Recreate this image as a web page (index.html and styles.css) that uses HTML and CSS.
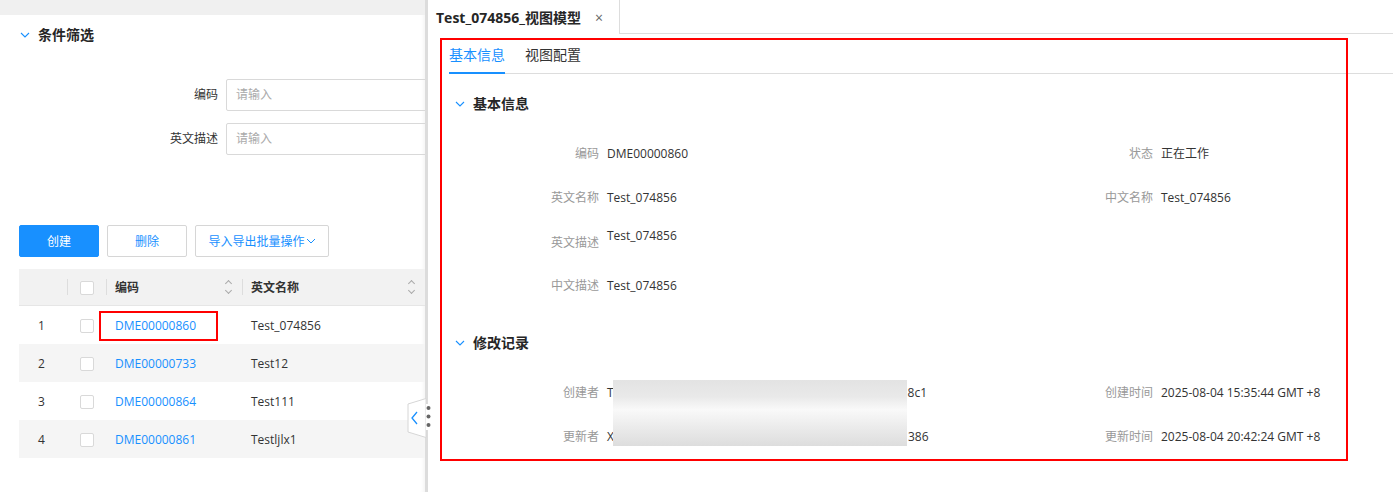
FILE: index.html
```html
<!DOCTYPE html>
<html lang="zh-CN">
<head>
    <meta charset="UTF-8">
    <title>视图模型</title>
    <link rel="stylesheet" href="styles.css">
</head>
<body>

<div class="page">
    <aside class="list-panel">
        <div class="top-strip"></div>

        <div class="section-title filter-title">
            <svg class="chev" width="10" height="6" viewBox="0 0 10 6"><path d="M1 1 L5 5 L9 1" /></svg>
            条件筛选
        </div>

        <div class="filter-form">
            <span class="field-label">编码</span>
            <span class="input">请输入</span>
            <span class="field-label">英文描述</span>
            <span class="input">请输入</span>
        </div>

        <div class="toolbar">
            <button class="btn btn-primary">创建</button>
            <button class="btn">删除</button>
            <button class="btn btn-wide">导入导出批量操作<svg class="btn-arrow" width="10" height="6" viewBox="0 0 10 6"><path d="M1 1 L5 5 L9 1" /></svg></button>
        </div>

        <div class="table-wrap">
            <table class="grid-table">
                <thead>
                    <tr>
                        <th class="col-index"></th>
                        <th class="col-check"><span class="checkbox"></span></th>
                        <th class="col-code">编码<span class="sorter"></span></th>
                        <th class="col-name">英文名称<span class="sorter"></span></th>
                    </tr>
                </thead>
                <tbody>
                    <tr>
                        <td class="col-index">1</td>
                        <td class="col-check"><span class="checkbox"></span></td>
                        <td class="col-code"><a>DME00000860</a></td>
                        <td class="col-name">Test_074856</td>
                    </tr>
                    <tr>
                        <td class="col-index">2</td>
                        <td class="col-check"><span class="checkbox"></span></td>
                        <td class="col-code"><a>DME00000733</a></td>
                        <td class="col-name">Test12</td>
                    </tr>
                    <tr>
                        <td class="col-index">3</td>
                        <td class="col-check"><span class="checkbox"></span></td>
                        <td class="col-code"><a>DME00000864</a></td>
                        <td class="col-name">Test111</td>
                    </tr>
                    <tr>
                        <td class="col-index">4</td>
                        <td class="col-check"><span class="checkbox"></span></td>
                        <td class="col-code"><a>DME00000861</a></td>
                        <td class="col-name">Testljlx1</td>
                    </tr>
                </tbody>
            </table>
            <!-- annotation frame drawn over the first code cell -->
            <div class="mark mark-cell"></div>
        </div>
    </aside>

    <div class="splitter">
        <svg class="collapse-handle" width="24" height="40" viewBox="0 0 24 40">
            <polygon points="1,6 19,0.5 19,39.5 1,34" fill="#fff" stroke="#d6d6d6" />
            <path d="M10 14 L5 20 L10 26" fill="none" stroke="#1890ff" stroke-width="1.3" />
            <rect x="19" y="6" width="5" height="26" fill="#fff" />
            <circle cx="21.5" cy="10" r="2" fill="#666" />
            <circle cx="21.5" cy="18.5" r="2" fill="#666" />
            <circle cx="21.5" cy="27" r="2" fill="#666" />
        </svg>
    </div>

    <main class="detail-panel">
        <div class="doc-tabs">
            <div class="doc-tab">Test_074856_视图模型<span class="close">×</span></div>
            <div class="doc-tabs-rest"></div>
        </div>

        <div class="detail-body">
            <div class="inner-tabs">
                <span class="inner-tab active">基本信息</span>
                <span class="inner-tab">视图配置</span>
            </div>

            <div class="section-title block-title">
                <svg class="chev" width="10" height="6" viewBox="0 0 10 6"><path d="M1 1 L5 5 L9 1" /></svg>
                基本信息
            </div>
            <div class="info-grid">
                <span class="info-label">编码</span>
                <span class="info-value">DME00000860</span>
                <span class="info-label">状态</span>
                <span class="info-value">正在工作</span>

                <span class="info-label">英文名称</span>
                <span class="info-value">Test_074856</span>
                <span class="info-label">中文名称</span>
                <span class="info-value">Test_074856</span>

                <span class="info-label info-label-low">英文描述</span>
                <span class="info-value info-value-high">Test_074856</span>
                <span class="info-label"></span>
                <span class="info-value"></span>

                <span class="info-label">中文描述</span>
                <span class="info-value">Test_074856</span>
                <span class="info-label"></span>
                <span class="info-value"></span>
            </div>

            <div class="section-title block-title record-title">
                <svg class="chev" width="10" height="6" viewBox="0 0 10 6"><path d="M1 1 L5 5 L9 1" /></svg>
                修改记录
            </div>
            <div class="info-grid record-grid">
                <span class="info-label">创建者</span>
                <span class="info-value">T<span class="masked"></span>8c1</span>
                <span class="info-label">创建时间</span>
                <span class="info-value">2025-08-04 15:35:44 GMT +8</span>

                <span class="info-label">更新者</span>
                <span class="info-value">X<span class="masked"></span>386</span>
                <span class="info-label">更新时间</span>
                <span class="info-value">2025-08-04 20:42:24 GMT +8</span>

                <!-- blurred-out user ids -->
                <div class="blur-patch"></div>
            </div>
        </div>

        <!-- annotation frame around the detail area -->
        <div class="mark mark-detail"></div>
    </main>
</div>

</body>
</html>
```

FILE: styles.css
```css
body {
    margin: 0;
    font-family: 'Open Sans', 'Noto Sans CJK SC', sans-serif;
    font-size: 12px;
    color: #333;
    background: #fff;
    overflow: hidden;
}

.page {
    display: flex;
    height: 492px;
}

/* ---------- left list ---------- */

.list-panel {
    width: 425px;
    flex: none;
    overflow: hidden;
    background: #fff;
    box-shadow: inset -4px 0 4px -3px rgba(0, 0, 0, 0.06);
}

.top-strip {
    height: 15px;
    background: #f0f0f0;
}

.section-title {
    display: flex;
    align-items: center;
    font-size: 14px;
    font-weight: bold;
    color: #262626;
    line-height: 22px;
}

.chev {
    fill: none;
    stroke: #1890ff;
    stroke-width: 1.1;
    margin-right: 8px;
}

.filter-title {
    margin-top: 9px;
    padding-left: 20px;
}

.filter-form {
    display: grid;
    grid-template-columns: 218px 260px;
    column-gap: 8px;
    row-gap: 12px;
    margin-top: 33px;
}

.field-label {
    text-align: right;
    line-height: 32px;
    color: #333;
}

.input {
    height: 30px;
    line-height: 30px;
    border: 1px solid #d9d9d9;
    border-radius: 2px;
    padding-left: 9px;
    color: #aaa;
}

.toolbar {
    display: flex;
    gap: 8px;
    margin-top: 70px;
    padding-left: 19px;
}

.btn {
    height: 32px;
    width: 80px;
    border: 1px solid #d6d6d6;
    border-radius: 2px;
    background: #fff;
    color: #1890ff;
    font-family: inherit;
    font-size: 12px;
    padding: 0;
}

.btn-primary {
    background: #1890ff;
    border-color: #1890ff;
    color: #fff;
}

.btn-wide {
    width: 134px;
}

.btn-arrow {
    fill: none;
    stroke: #1890ff;
    stroke-width: 1;
    margin-left: 1px;
    vertical-align: 2px;
}

.table-wrap {
    position: relative;
    margin-top: 12px;
    padding-left: 19px;
}

.grid-table {
    width: 406px;
    border-collapse: collapse;
    table-layout: fixed;
}

.grid-table th {
    height: 36px;
    background: #f2f2f2;
    border-bottom: 1px solid #e6e6e6;
    text-align: left;
    font-weight: bold;
    color: #333;
    position: relative;
    padding: 0 0 0 9px;
}

.grid-table th + th::before {
    content: "";
    position: absolute;
    left: 0;
    top: 10px;
    height: 16px;
    border-left: 1px solid #ddd;
}

.grid-table td {
    height: 38px;
    padding: 0 0 0 9px;
}

.grid-table tbody tr:nth-child(even) td {
    background: #f5f5f5;
}

.col-index { width: 39px; }
.col-check { width: 30px; }
.col-code { width: 127px; }

.grid-table td.col-index {
    padding-left: 19px;
    width: 29px;
}

.grid-table .col-check {
    padding-left: 13px;
    width: 26px;
}

.checkbox {
    display: inline-block;
    width: 12px;
    height: 12px;
    border: 1px solid #d9d9d9;
    border-radius: 2px;
    background: #fff;
    vertical-align: middle;
}

.grid-table a {
    color: #1890ff;
}

.sorter {
    position: absolute;
    right: 9px;
    top: 11px;
    width: 8px;
    height: 14px;
}

.sorter::before,
.sorter::after {
    content: "";
    position: absolute;
    left: 1px;
    width: 4px;
    height: 4px;
    border-left: 1px solid #aaa;
    border-top: 1px solid #aaa;
    transform: rotate(45deg);
}

.sorter::before { top: 1px; }
.sorter::after { top: 8px; transform: rotate(225deg); }

.mark {
    position: absolute;
    border: 2px solid #f00;
    box-sizing: border-box;
    pointer-events: none;
}

.mark-cell {
    left: 99px;
    top: 42px;
    width: 119px;
    height: 30px;
}

/* ---------- splitter ---------- */

.splitter {
    position: relative;
    width: 3px;
    flex: none;
    background: #dcdcdc;
}

.collapse-handle {
    position: absolute;
    left: -18px;
    top: 398px;
}

/* ---------- right detail ---------- */

.detail-panel {
    position: relative;
    flex: 1;
    min-width: 0;
}

.doc-tabs {
    display: flex;
    height: 34px;
}

.doc-tab {
    width: 183px;
    padding-left: 8px;
    border-right: 1px solid #ddd;
    font-size: 14px;
    font-weight: bold;
    color: #262626;
    line-height: 31px;
    display: flex;
    align-items: center;
}

.close {
    font-weight: normal;
    color: #666;
    font-size: 14px;
    margin-left: 14px;
}

.doc-tabs-rest {
    flex: 1;
    border-bottom: 1px solid #ddd;
}

.detail-body {
    padding-left: 21px;
}

.inner-tabs {
    display: flex;
    gap: 20px;
    margin-top: 7px;
    border-bottom: 1px solid #ddd;
}

.inner-tab {
    font-size: 14px;
    line-height: 22px;
    padding-top: 3px;
    padding-bottom: 7px;
    margin-bottom: -1px;
    color: #333;
}

.inner-tab.active {
    color: #1890ff;
    border-bottom: 2px solid #1890ff;
    padding-bottom: 6px;
}

.block-title {
    margin-top: 19px;
    padding-left: 6px;
}

.record-title {
    margin-top: 25px;
}

.info-grid {
    position: relative;
    display: grid;
    grid-template-columns: 158px 396px 158px 1fr;
    grid-auto-rows: 44px;
    margin-top: 16px;
    align-items: center;
}

.info-label {
    text-align: right;
    padding-right: 8px;
    color: #999;
}

.info-value {
    color: #333;
    white-space: nowrap;
}

.info-label-low {
    padding-top: 2px;
}

.info-value-high {
    margin-top: -12px;
}

.masked {
    display: inline-block;
    width: 294px;
}

.blur-patch {
    position: absolute;
    left: 164px;
    top: 10px;
    width: 294px;
    height: 66px;
    background: linear-gradient(to bottom, #e3e3e3 0%, #e9e9e9 25%, #f9f9f9 45%, #ececec 70%, #dddddd 100%);
}

.mark-detail {
    left: 12px;
    top: 38px;
    width: 908px;
    height: 423px;
}
```
